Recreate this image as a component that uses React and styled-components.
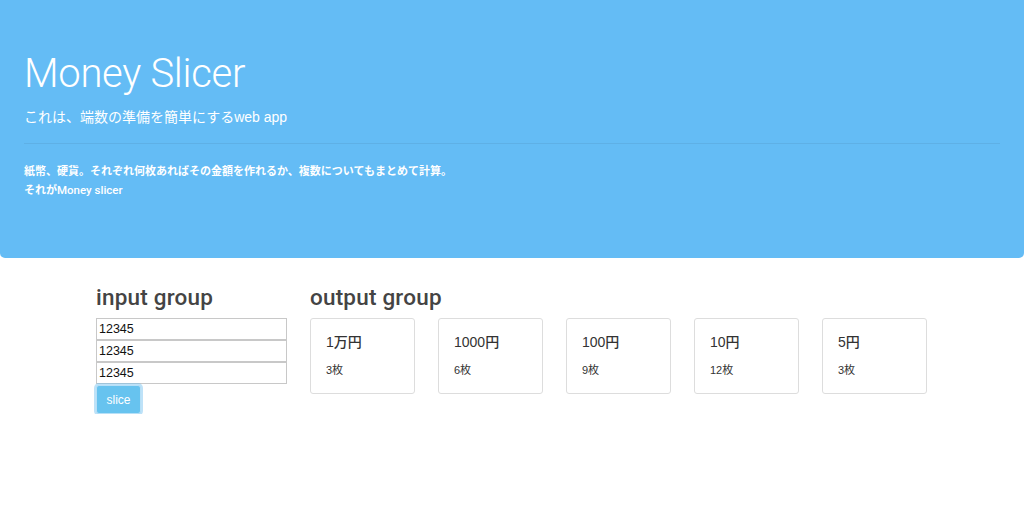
import React from "react";
import styled, { createGlobalStyle } from "styled-components";

const GlobalStyle = createGlobalStyle`
  html, body {
    margin: 0;
    padding: 0;
    background: #fff;
    font-family: "Liberation Sans", "Noto Sans CJK JP", sans-serif;
    color: #333;
  }
  * { box-sizing: border-box; }
`;

const outputData = [
  { id: 1, label: "1万円", count: "3枚" },
  { id: 2, label: "1000円", count: "6枚" },
  { id: 3, label: "100円", count: "9枚" },
  { id: 4, label: "10円", count: "12枚" },
  { id: 5, label: "5円", count: "3枚" },
];

const inputs = ["12345", "12345", "12345"];

const App = () => {
  return (
    <>
      <GlobalStyle />
      <Jumbotron>
        <Title>Money Slicer</Title>
        <Lead>これは、端数の準備を簡単にするweb app</Lead>
        <Rule />
        <Desc>
          紙幣、硬貨。それぞれ何枚あればその金額を作れるか、複数についてもまとめて計算。
          <br />
          それが<Plain>Money slicer</Plain>
        </Desc>
      </Jumbotron>

      <Main>
        <InputCol>
          <GroupTitle>input group</GroupTitle>
          {inputs.map((v, i) => (
            <Field key={i} defaultValue={v} />
          ))}
          <SliceButton>slice</SliceButton>
        </InputCol>

        <OutputCol>
          <GroupTitle>output group</GroupTitle>
          <CardRow>
            {outputData.map((item) => (
              <Card key={item.id}>
                <h4>{item.label}</h4>
                <p>{item.count}</p>
              </Card>
            ))}
          </CardRow>
        </OutputCol>
      </Main>
    </>
  );
};

export default App;

// --- Styled Components ---

const Jumbotron = styled.header`
  background: #64bcf5;
  color: #fff;
  height: 258px;
  padding: 50px 24px 0;
  border-radius: 0 0 5px 5px;
`;

const Title = styled.h1`
  margin: 0;
  font-family: Roboto, "Liberation Sans", sans-serif;
  font-weight: 300;
  font-size: 40px;
  line-height: 48px;
  letter-spacing: -0.3px;
`;

const Lead = styled.p`
  margin: 9px 0 0;
  font-size: 14px;
  line-height: 20px;
  font-weight: 400;
`;

const Rule = styled.hr`
  margin: 16px 0 0;
  border: 0;
  border-top: 1px solid rgba(0, 0, 0, 0.06);
`;

const Desc = styled.p`
  margin: 18px 0 0;
  font-size: 11px;
  line-height: 19px;
  font-weight: 700;
`;

const Plain = styled.span`
  font-family: Roboto, "Liberation Sans", sans-serif;
  font-weight: 500;
  font-size: 11.5px;
`;

const Main = styled.main`
  display: flex;
  gap: 23px;
  padding: 27px 0 0 96px;
`;

const InputCol = styled.section`
  width: 191px;
  display: flex;
  flex-direction: column;
  align-items: flex-start;
`;

const OutputCol = styled.section`
  display: flex;
  flex-direction: column;
`;

const GroupTitle = styled.h3`
  margin: 0 0 8px;
  font-family: Roboto, "Liberation Sans", sans-serif;
  font-size: 22.5px;
  line-height: 25px;
  font-weight: 500;
  color: #444;
  letter-spacing: 0.2px;
`;

const Field = styled.input`
  width: 191px;
  height: 22px;
  margin: 0;
  padding: 1px 2px;
  border: 1px solid #c8c8c8;
  font-family: "Liberation Sans", sans-serif;
  font-size: 12.5px;
  color: #111;
  background: #fff;
  outline: none;
`;

const SliceButton = styled.button`
  margin-top: 1px;
  width: 45px;
  height: 29px;
  border: 1px solid #b7e0f7;
  border-radius: 3px;
  background: #67c3ef;
  color: #fff;
  font-family: "Liberation Sans", sans-serif;
  font-size: 12px;
  box-shadow: 0 0 0 2px rgba(110, 190, 240, 0.45);
  cursor: pointer;
`;

const CardRow = styled.div`
  display: flex;
  gap: 23px;
`;

const Card = styled.div`
  width: 105px;
  height: 76px;
  border: 1px solid #ddd;
  border-radius: 3px;
  padding: 14px 15px 0;
  background: #fff;

  h4 {
    margin: 0;
    font-size: 14px;
    line-height: 18px;
    font-weight: 500;
    color: #333;
  }

  p {
    margin: 12px 0 0;
    font-size: 11px;
    line-height: 14px;
    color: #333;
  }
`;
